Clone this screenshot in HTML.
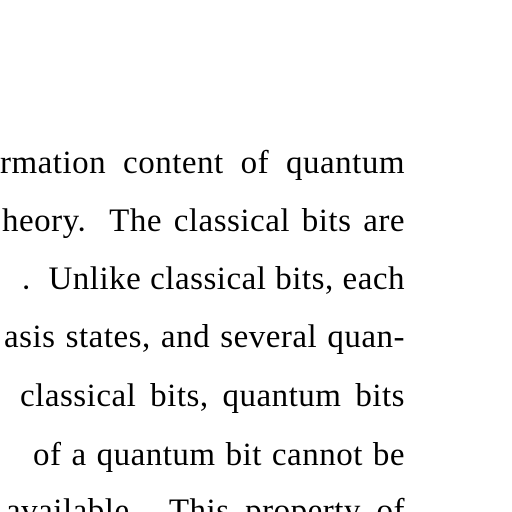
<!DOCTYPE html>
<html><head><meta charset="utf-8"><style>
html,body{margin:0;padding:0;background:#fff;width:512px;height:512px;overflow:hidden;position:relative}
.l{position:absolute;right:107px;white-space:nowrap;font-family:"Liberation Serif",serif;font-size:33px;letter-spacing:0.5px;color:#000;text-align:justify;text-align-last:justify;line-height:34px}
</style></head><body>
<div class="l" style="top:146px;left:0px">rmation content of quantum</div>
<div class="l" style="top:204px;left:2px">heory.&nbsp; The classical bits are</div>
<div class="l" style="top:262px;left:22px">.&nbsp; Unlike classical bits, each</div>
<div class="l" style="top:320px;left:4px">asis states, and several quan-</div>
<div class="l" style="top:379px;left:20px">classical bits, quantum bits</div>
<div class="l" style="top:438px;left:33px">of a quantum bit cannot be</div>
<div class="l" style="top:494px;left:6px">available.&nbsp; This property of</div>
</body></html>
